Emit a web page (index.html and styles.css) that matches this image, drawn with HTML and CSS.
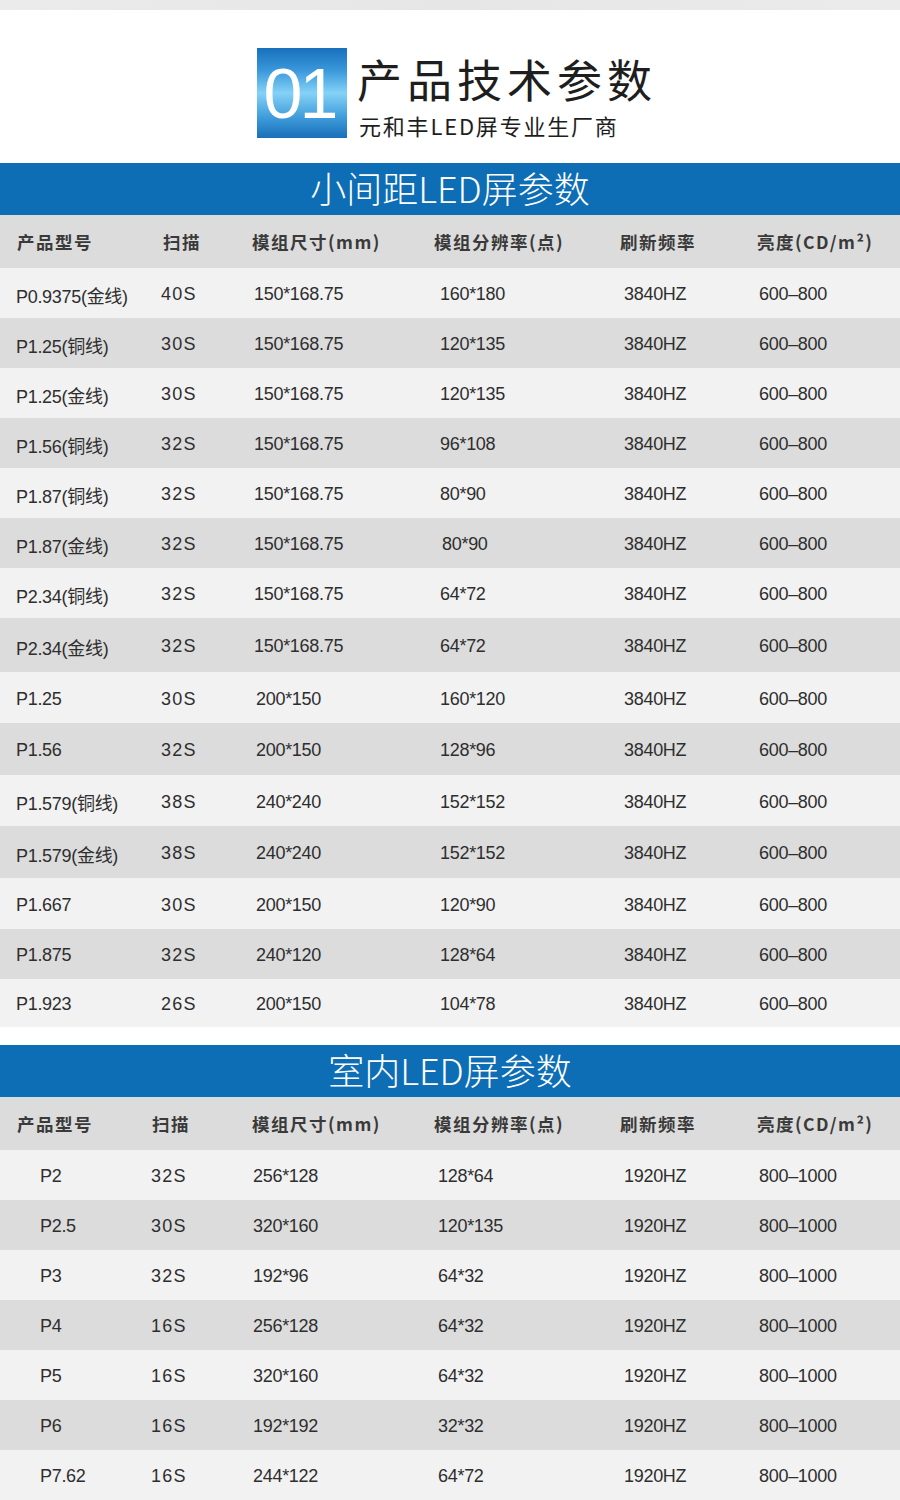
FILE: index.html
```html
<!DOCTYPE html>
<html lang="zh">
<head>
<meta charset="utf-8">
<title>产品技术参数</title>
<link rel="stylesheet" href="styles.css">
</head>
<body>
<div class="topstrip"></div>
<header class="intro">
  <div class="num">01</div>
  <div class="intro-text">
    <h1 class="title">产品技术参数</h1>
    <p class="subtitle">元和丰LED屏专业生厂商</p>
  </div>
</header>

<section class="tbl t1">
  <h2 class="bar">小间距LED屏参数</h2>
  <div class="row head"><span>产品型号</span><span>扫描</span><span>模组尺寸(mm)</span><span>模组分辨率(点)</span><span>刷新频率</span><span>亮度(CD/m²)</span></div>
  <div class="row lt"><span>P0.9375(金线)</span><span class="sc">40S</span><span>150*168.75</span><span>160*180</span><span>3840HZ</span><span>600–800</span></div>
  <div class="row dk"><span>P1.25(铜线)</span><span class="sc">30S</span><span>150*168.75</span><span>120*135</span><span>3840HZ</span><span>600–800</span></div>
  <div class="row lt"><span>P1.25(金线)</span><span class="sc">30S</span><span>150*168.75</span><span>120*135</span><span>3840HZ</span><span>600–800</span></div>
  <div class="row dk"><span>P1.56(铜线)</span><span class="sc">32S</span><span>150*168.75</span><span>96*108</span><span>3840HZ</span><span>600–800</span></div>
  <div class="row lt"><span>P1.87(铜线)</span><span class="sc">32S</span><span>150*168.75</span><span>80*90</span><span>3840HZ</span><span>600–800</span></div>
  <div class="row dk"><span>P1.87(金线)</span><span class="sc">32S</span><span>150*168.75</span><span class="nudge">80*90</span><span>3840HZ</span><span>600–800</span></div>
  <div class="row lt"><span>P2.34(铜线)</span><span class="sc">32S</span><span>150*168.75</span><span>64*72</span><span>3840HZ</span><span>600–800</span></div>
  <div class="row dk h54"><span>P2.34(金线)</span><span class="sc">32S</span><span>150*168.75</span><span>64*72</span><span>3840HZ</span><span>600–800</span></div>
  <div class="row lt h51"><span>P1.25</span><span class="sc">30S</span><span class="c3">200*150</span><span>160*120</span><span>3840HZ</span><span>600–800</span></div>
  <div class="row dk h52"><span>P1.56</span><span class="sc">32S</span><span class="c3">200*150</span><span>128*96</span><span>3840HZ</span><span>600–800</span></div>
  <div class="row lt h51"><span>P1.579(铜线)</span><span class="sc">38S</span><span class="c3">240*240</span><span>152*152</span><span>3840HZ</span><span>600–800</span></div>
  <div class="row dk h52"><span>P1.579(金线)</span><span class="sc">38S</span><span class="c3">240*240</span><span>152*152</span><span>3840HZ</span><span>600–800</span></div>
  <div class="row lt h51"><span>P1.667</span><span class="sc">30S</span><span class="c3">200*150</span><span>120*90</span><span>3840HZ</span><span>600–800</span></div>
  <div class="row dk"><span>P1.875</span><span class="sc">32S</span><span class="c3">240*120</span><span>128*64</span><span>3840HZ</span><span>600–800</span></div>
  <div class="row lt h48"><span>P1.923</span><span class="sc">26S</span><span class="c3">200*150</span><span>104*78</span><span>3840HZ</span><span>600–800</span></div>
</section>

<section class="tbl t2">
  <h2 class="bar">室内LED屏参数</h2>
  <div class="row head"><span>产品型号</span><span>扫描</span><span>模组尺寸(mm)</span><span>模组分辨率(点)</span><span>刷新频率</span><span>亮度(CD/m²)</span></div>
  <div class="row lt"><span>P2</span><span class="sc">32S</span><span>256*128</span><span>128*64</span><span>1920HZ</span><span>800–1000</span></div>
  <div class="row dk"><span>P2.5</span><span class="sc">30S</span><span>320*160</span><span>120*135</span><span>1920HZ</span><span>800–1000</span></div>
  <div class="row lt"><span>P3</span><span class="sc">32S</span><span>192*96</span><span>64*32</span><span>1920HZ</span><span>800–1000</span></div>
  <div class="row dk"><span>P4</span><span class="sc">16S</span><span>256*128</span><span>64*32</span><span>1920HZ</span><span>800–1000</span></div>
  <div class="row lt"><span>P5</span><span class="sc">16S</span><span>320*160</span><span>64*32</span><span>1920HZ</span><span>800–1000</span></div>
  <div class="row dk"><span>P6</span><span class="sc">16S</span><span>192*192</span><span>32*32</span><span>1920HZ</span><span>800–1000</span></div>
  <div class="row lt"><span>P7.62</span><span class="sc">16S</span><span>244*122</span><span>64*72</span><span>1920HZ</span><span>800–1000</span></div>
</section>
</body>
</html>
```

FILE: styles.css
```css
html, body {
  margin: 0;
  padding: 0;
  background: #ffffff;
}
body {
  width: 900px;
  font-family: "Liberation Sans", "Noto Sans CJK SC", sans-serif;
  color: #333333;
}

.topstrip {
  height: 10px;
  background: linear-gradient(90deg, #ebebeb, #e6e6e6 50%, #ebebeb);
}

.intro {
  display: flex;
  align-items: flex-start;
  gap: 10px;
  padding: 38px 0 0 257px;
  height: 143px;
  box-sizing: border-box;
}
.num {
  width: 90px;
  height: 90px;
  background: linear-gradient(180deg, #1870bd 0%, #3a98da 25%, #84d2f7 50%, #3d9ad9 78%, #1a6fb9 100%);
  color: #ffffff;
  font-family: "Liberation Sans", sans-serif;
  font-size: 70px;
  line-height: 92px;
  text-align: center;
  letter-spacing: -3px;
  text-indent: -5px;
}
.intro-text {
  display: flex;
  flex-direction: column;
}
.title {
  margin: 0;
  padding-top: 8px;
  font-family: "Noto Sans CJK SC", sans-serif;
  font-weight: 400;
  font-size: 45px;
  line-height: 45px;
  letter-spacing: 5px;
  color: #1e1e1e;
}
.subtitle {
  margin: 12px 0 0 2px;
  font-family: "Noto Sans CJK SC", sans-serif;
  font-size: 22px;
  line-height: 24px;
  letter-spacing: 1.8px;
  color: #1e1e1e;
}

.tbl {
  background: #f2f2f2;
}
.t1 {
  margin-top: 10px;
}
.t2 {
  margin-top: 18px;
}

.bar {
  margin: 0;
  height: 52px;
  background: #0d6db5;
  color: #ffffff;
  text-align: center;
  font-family: "Noto Sans CJK SC", sans-serif;
  font-weight: 300;
  font-size: 36px;
  line-height: 48px;
}

.row {
  display: grid;
  align-items: center;
  height: 50px;
  font-size: 18px;
  letter-spacing: -0.3px;
  color: #2e2e2e;
  white-space: nowrap;
}
.row > span {
  padding-top: 3px;
}
.row.lt { background: #f2f2f2; }
.row.dk { background: #dcdcdc; }
.row.h54 { height: 54px; }
.row.h52 { height: 52px; }
.row.h51 { height: 51px; }
.row.h48 { height: 48px; }

.row.head {
  height: 53px;
  background: #dcdcdc;
  font-family: "Noto Sans CJK SC", sans-serif;
  font-weight: 700;
  font-size: 17.5px;
  letter-spacing: 1.5px;
  color: #3a3a3a;
}
.row.head > span {
  padding-top: 0;
}

.sc { letter-spacing: 1.2px; }
.c3 { padding-left: 2px; }
.nudge { padding-left: 2px; }

.t1 .row {
  padding-left: 16px;
  grid-template-columns: 145px 93px 186px 184px 135px 1fr;
}
.t1 .row.head {
  padding-left: 17px;
  grid-template-columns: 146px 89px 182px 186px 137px 1fr;
}
.t2 .row {
  padding-left: 40px;
  grid-template-columns: 111px 102px 185px 186px 135px 1fr;
}
.t2 .row.head {
  padding-left: 17px;
  grid-template-columns: 135px 100px 182px 186px 137px 1fr;
}
```
